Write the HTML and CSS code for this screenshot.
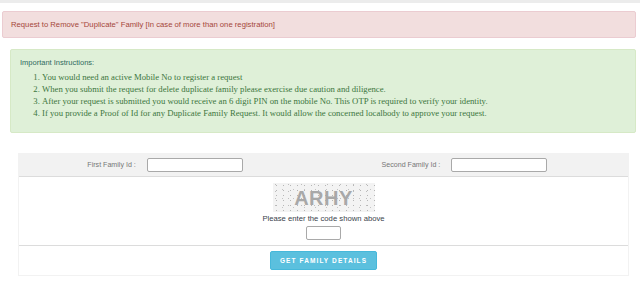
FILE: index.html
```html
<!DOCTYPE html>
<html lang="en">
<head>
  <meta charset="UTF-8" />
  <meta name="viewport" content="width=device-width, initial-scale=1.0" />
  <title>Remove Duplicate Family</title>
  <link rel="stylesheet" href="styles.css">
</head>
<body>
  <div class="topbar"></div>

  <div class="alert alert-danger">Request to Remove "Duplicate" Family [In case of more than one registration]</div>

  <div class="alert alert-success">
    <div class="notice-title">Important Instructions:</div>
    <ol class="notice-list">
      <li>You would need an active Mobile No to register a request</li>
      <li>When you submit the request for delete duplicate family please exercise due caution and diligence.</li>
      <li>After your request is submitted you would receive an 6 digit PIN on the mobile No. This OTP is required to verify your identity.</li>
      <li>If you provide a Proof of Id for any Duplicate Family Request. It would allow the concerned localbody to approve your request.</li>
    </ol>
  </div>

  <div class="form-box">
    <div class="id-row">
      <label class="id-label" for="firstId">First Family Id :</label>
      <div class="id-field"><input type="text" id="firstId"></div>
      <label class="id-label" for="secondId">Second Family Id :</label>
      <div class="id-field"><input type="text" id="secondId"></div>
    </div>

    <div class="captcha-row">
      <div class="captcha-img">ARHY</div>
      <div class="captcha-hint">Please enter the code shown above</div>
      <input type="text" class="captcha-input">
    </div>

    <div class="action-row">
      <button class="btn-info" type="button">GET FAMILY DETAILS</button>
    </div>
  </div>
</body>
</html>
```

FILE: styles.css
```css
* {
  box-sizing: border-box;
  margin: 0;
  padding: 0;
}

body {
  background: #fff;
  font-family: 'Liberation Sans', Arial, sans-serif;
  color: #333;
}

.topbar {
  height: 3px;
  background: #ececec;
}

.alert {
  border: 1px solid transparent;
  border-radius: 2px;
}

.alert-danger {
  margin: 8px 4px 0 2px;
  height: 27px;
  padding: 0 8px;
  line-height: 25px;
  font-size: 7.7px;
  color: #a5473a;
  background: #f2dede;
  border-color: #ebccd1;
}

.alert-success {
  margin: 11px 4px 0 10px;
  height: 84px;
  padding: 7px 9px 0;
  background: #dff0d8;
  border-color: #d6e9c6;
}

.notice-title {
  font-size: 7.5px;
  line-height: 12px;
  color: #2f6b5e;
}

.notice-list {
  margin-top: 2px;
  padding-left: 22px;
  font-family: 'Liberation Serif', 'Times New Roman', serif;
  font-size: 8.7px;
  line-height: 12px;
  color: #3c763d;
}

.form-box {
  margin: 20px 11px 0 18px;
  border: 1px solid #f2f2f2;
  border-top: 0;
}

.id-row {
  display: grid;
  grid-template-columns: 20% 30% 20% 30%;
  align-items: center;
  height: 24px;
  background: #f2f2f2;
  border-bottom: 1px solid #dcdcdc;
}

.id-label {
  text-align: right;
  padding-right: 5px;
  font-size: 7.1px;
  color: #777;
}

.id-field {
  padding-left: 6px;
}

.id-field input {
  display: block;
  width: 96px;
  height: 14px;
  border: 1px solid #a9a9a9;
  border-radius: 2px;
  background: #fff;
}

.captcha-row {
  display: flex;
  flex-direction: column;
  align-items: center;
  height: 69px;
  padding-top: 6px;
  border-bottom: 1px solid #dcdcdc;
}

.captcha-img {
  width: 102px;
  height: 29px;
  line-height: 31px;
  text-align: center;
  font-size: 20px;
  font-weight: bold;
  color: #a8a8a8;
  letter-spacing: 0.5px;
  background-color: #f3f3f3;
  background-image:
    radial-gradient(#b5b5b5 0.5px, transparent 0.8px),
    radial-gradient(#c4c4c4 0.5px, transparent 0.8px),
    radial-gradient(#bdbdbd 0.4px, transparent 0.7px);
  background-size: 7px 5px, 11px 9px, 13px 7px;
  background-position: 0 0, 4px 2px, 9px 5px;
}

.captcha-hint {
  margin-top: 2px;
  font-size: 7.7px;
  line-height: 10px;
  color: #3a3f4c;
}

.captcha-input {
  margin-top: 2px;
  width: 35px;
  height: 14px;
  border: 1px solid #a9a9a9;
  border-radius: 2px;
}

.action-row {
  display: flex;
  justify-content: center;
  height: 29px;
  padding-top: 5px;
}

.btn-info {
  width: 107px;
  height: 19px;
  font-family: 'Liberation Sans', Arial, sans-serif;
  font-size: 6.5px;
  font-weight: bold;
  letter-spacing: 1.1px;
  color: #fff;
  background: #5bc0de;
  border: 1px solid #46b8da;
  border-radius: 2px;
}
```
